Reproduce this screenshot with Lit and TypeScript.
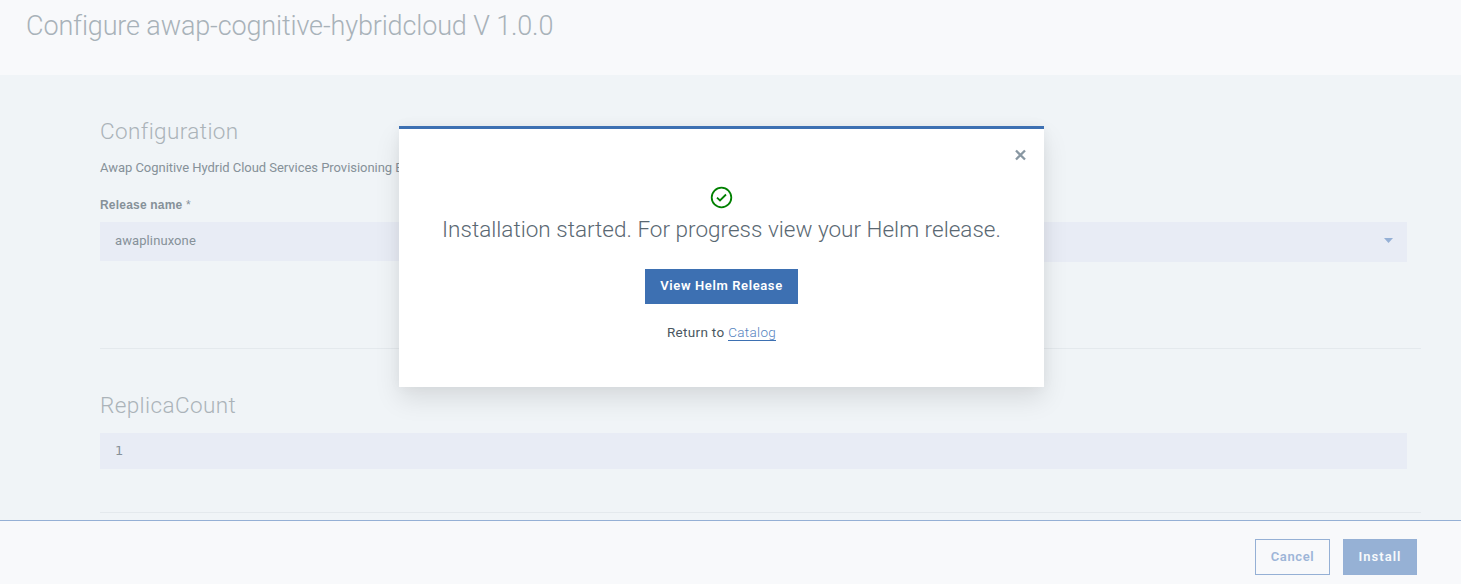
import { LitElement, html, css } from "lit";
import { customElement } from "lit/decorators.js";

@customElement("install-dialog")
class InstallDialog extends LitElement {
  static styles = css`
    :host { display: block; width: 645px; height: 261px; box-sizing: border-box; border-top: 3px solid #3d70b2; background: #fff; box-shadow: 0 12px 24px 0 rgba(0, 0, 0, 0.1), 0 0 12px rgba(0, 0, 0, 0.04); color: #5a6872; font-family: Roboto, "Noto Sans", sans-serif; }
    .top { display: flex; justify-content: flex-end; padding: 20px 17px 0 0; height: 37px; box-sizing: border-box; }
    .top svg { display: block; }
    .body { display: flex; flex-direction: column; align-items: center; padding-top: 20px; }
    .check { display: block; width: 23px; height: 23px; }
    .message { margin: 6px 0 0; font-size: 22.5px; line-height: 28px; font-weight: 300; letter-spacing: 0.01px; white-space: nowrap; }
    .primary { margin-top: 26px; width: 153px; height: 35px; padding: 0 0 2px; box-sizing: border-box; border: 0; background: #3d70b2; color: #fff; font: 600 13px Roboto, sans-serif; letter-spacing: 0.62px; white-space: nowrap; }
    .return { margin: 18px 0 0; font-size: 13.5px; line-height: 20px; letter-spacing: 0.32px; color: #4a5761; }
    .link { color: #5583c0; border-bottom: 1px solid #3d70b2; font-weight: 300; display: inline-block; line-height: 15px; }
  `;
  render() {
    return html`
      <div class="top">
        <svg width="13" height="12" viewBox="0 0 13 12"><path d="M2 1.5l9 9m0-9l-9 9" stroke="#8897a2" stroke-width="2.3" fill="none" /></svg>
      </div>
      <div class="body">
        <svg class="check" viewBox="0 0 23 23" fill="none" stroke="#008000"><circle cx="11.5" cy="11.5" r="9.8" stroke-width="1.8" /><path d="M7 11.6l3 2.8 6-5.9" stroke-width="1.8" /></svg>
        <p class="message">Installation started. For progress view your Helm release.</p>
        <button class="primary">View Helm Release</button>
        <p class="return">Return to <span class="link">Catalog</span></p>
      </div>
    `;
  }
}

@customElement("app-root")
class AppRoot extends LitElement {
  static styles = css`
    :host { display: block; position: relative; height: 584px; overflow: hidden; font-family: Roboto, "Noto Sans", sans-serif; background: #f0f4f7; color: #869199; }
    .page { display: flex; flex-direction: column; height: 584px; }
    .header { height: 75px; box-sizing: border-box; padding: 8px 26px 0; background: #f8f9fb; }
    .title { margin: 0; font-size: 27px; line-height: 36px; font-weight: 300; color: #a8b2b9; letter-spacing: -0.14px; white-space: nowrap; }
    .content { flex: 1; min-height: 0; padding: 0 40px 0 100px; overflow: hidden; }
    .section { box-sizing: border-box; border-bottom: 1px solid #e4e9ed; }
    .config { height: 274px; padding: 40px 14px 0 0; }
    .replica { height: 164px; padding: 40px 14px 0 0; }
    .heading { margin: 0; font-size: 22.5px; line-height: 32px; font-weight: 300; color: #abb3b9; letter-spacing: 0.4px; }
    .summary { margin: 11px 0 0; font-size: 13px; line-height: 20px; letter-spacing: -0.04px; white-space: nowrap; }
    .label { display: block; margin-top: 17px; font: 700 12px/20px "Liberation Sans", sans-serif; letter-spacing: 0.2px; }
    .required { font-weight: 400; }
    .fields { display: grid; grid-template-columns: 1fr 1fr; gap: 27px; align-items: start; margin-top: 7px; }
    .field { display: flex; align-items: center; box-sizing: border-box; height: 39px; padding: 0 14px 2px 15px; background: #e8ecf5; font-size: 13px; letter-spacing: 0.1px; }
    .select { height: 40px; justify-content: flex-end; padding-bottom: 3px; }
    .number { height: 36px; margin-top: 12px; font: 13px "DejaVu Sans", sans-serif; }
    .footer { display: flex; justify-content: flex-end; gap: 13px; height: 64px; box-sizing: border-box; padding: 18px 44px 0 0; border-top: 1px solid #95b0d5; background: #f8f9fb; }
    .button { height: 36px; box-sizing: border-box; padding: 0 0 2px; border: 1px solid #95b0d5; font: 600 13px Roboto, sans-serif; letter-spacing: 0.7px; }
    .cancel { width: 75px; background: transparent; color: #9db5d8; letter-spacing: 0.6px; }
    .install { width: 74px; background: #96b1d5; color: #f8fafc; letter-spacing: 1px; }
    .dialog { position: absolute; left: 399px; top: 126px; }
  `;
  render() {
    return html`
      <div class="page">
        <header class="header"><h1 class="title">Configure awap-cognitive-hybridcloud V 1.0.0</h1></header>
        <main class="content">
          <section class="section config">
            <h2 class="heading">Configuration</h2>
            <p class="summary">Awap Cognitive Hydrid Cloud Services Provisioning E</p>
            <span class="label">Release name <span class="required">*</span></span>
            <div class="fields">
              <div class="field">awaplinuxone</div>
              <div class="field select"><svg width="9" height="5" viewBox="0 0 9 5"><path d="M0 0h9L4.5 5z" fill="#95b0d5" /></svg></div>
            </div>
          </section>
          <section class="section replica">
            <h2 class="heading">ReplicaCount</h2>
            <div class="field number">1</div>
          </section>
        </main>
        <footer class="footer">
          <button class="button cancel">Cancel</button>
          <button class="button install">Install</button>
        </footer>
      </div>
      <install-dialog class="dialog"></install-dialog>
    `;
  }
}
